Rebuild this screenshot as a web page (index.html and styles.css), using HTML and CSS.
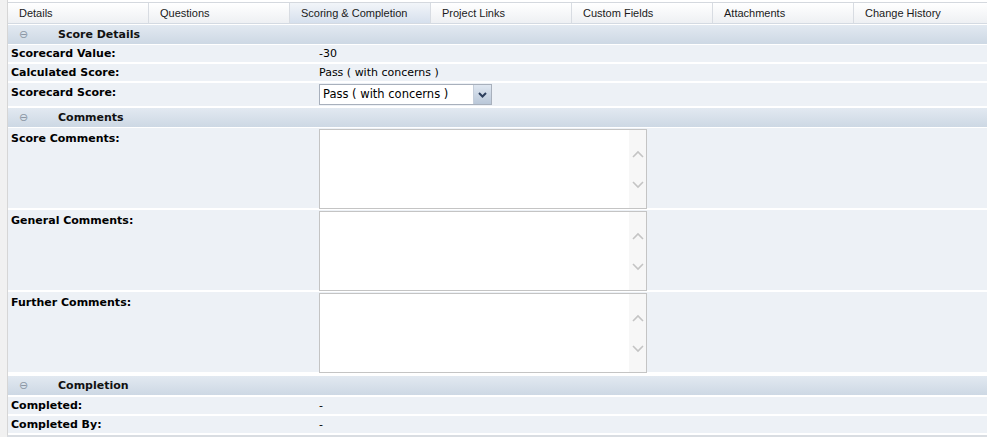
FILE: index.html
```html
<!DOCTYPE html>
<html lang="en">
<head>
    <meta charset="UTF-8">
    <meta name="viewport" content="width=device-width, initial-scale=1.0">
    <title>Scoring &amp; Completion</title>
    <link rel="stylesheet" href="styles.css">
</head>
<body>
    <div class="page">
        <ul class="tabs">
            <li>Details</li>
            <li>Questions</li>
            <li class="active">Scoring &amp; Completion</li>
            <li>Project Links</li>
            <li>Custom Fields</li>
            <li>Attachments</li>
            <li>Change History</li>
        </ul>

        <div class="section-head"><span class="toggle">&#8854;</span>Score Details</div>
        <div class="row">
            <div class="label">Scorecard Value:</div>
            <div class="value">-30</div>
        </div>
        <div class="row">
            <div class="label">Calculated Score:</div>
            <div class="value">Pass ( with concerns )</div>
        </div>
        <div class="row row-select">
            <div class="label">Scorecard Score:</div>
            <div class="value">
                <div class="select">
                    <span class="select-text">Pass ( with concerns )</span>
                    <span class="select-btn">
                        <svg width="9" height="6" viewBox="0 0 9 6"><path d="M1 1 L4.5 4.5 L8 1" fill="none" stroke="#2c3e5c" stroke-width="2"/></svg>
                    </span>
                </div>
            </div>
        </div>

        <div class="section-head"><span class="toggle">&#8854;</span>Comments</div>
        <div class="row row-text">
            <div class="label">Score Comments:</div>
            <div class="value">
                <div class="textbox">
                    <div class="text-area"></div>
                    <div class="scroll">
                        <svg width="12" height="8" viewBox="0 0 12 8"><path d="M1 7 L6 2 L11 7" fill="none" stroke="#c4c4c4" stroke-width="1.6"/></svg>
                        <svg width="12" height="8" viewBox="0 0 12 8"><path d="M1 1 L6 6 L11 1" fill="none" stroke="#c4c4c4" stroke-width="1.6"/></svg>
                    </div>
                </div>
            </div>
        </div>
        <div class="row row-text">
            <div class="label">General Comments:</div>
            <div class="value">
                <div class="textbox">
                    <div class="text-area"></div>
                    <div class="scroll">
                        <svg width="12" height="8" viewBox="0 0 12 8"><path d="M1 7 L6 2 L11 7" fill="none" stroke="#c4c4c4" stroke-width="1.6"/></svg>
                        <svg width="12" height="8" viewBox="0 0 12 8"><path d="M1 1 L6 6 L11 1" fill="none" stroke="#c4c4c4" stroke-width="1.6"/></svg>
                    </div>
                </div>
            </div>
        </div>
        <div class="row row-text">
            <div class="label">Further Comments:</div>
            <div class="value">
                <div class="textbox">
                    <div class="text-area"></div>
                    <div class="scroll">
                        <svg width="12" height="8" viewBox="0 0 12 8"><path d="M1 7 L6 2 L11 7" fill="none" stroke="#c4c4c4" stroke-width="1.6"/></svg>
                        <svg width="12" height="8" viewBox="0 0 12 8"><path d="M1 1 L6 6 L11 1" fill="none" stroke="#c4c4c4" stroke-width="1.6"/></svg>
                    </div>
                </div>
            </div>
        </div>

        <div class="section-head"><span class="toggle">&#8854;</span>Completion</div>
        <div class="row">
            <div class="label">Completed:</div>
            <div class="value">-</div>
        </div>
        <div class="row">
            <div class="label">Completed By:</div>
            <div class="value">-</div>
        </div>
    </div>
</body>
</html>
```

FILE: styles.css
```css
body {
    margin: 0;
    background-color: #fff;
    font-family: "DejaVu Sans", Tahoma, sans-serif;
    font-size: 11px;
    color: #000;
}

.page {
    margin-left: 7px;
    padding-top: 2px;
    border-left: 1px solid #d6d6d6;
    border-bottom: 2px solid #d9dde2;
    box-shadow: -7px 0 0 #f1f1f1;
}

.tabs {
    display: flex;
    list-style: none;
    margin: 0;
    padding: 0;
    height: 21px;
    border-top: 1px solid #d4d8de;
}

.tabs li {
    width: 129px;
    flex: none;
    padding-left: 11px;
    line-height: 20px;
    font-family: "Liberation Sans", Arial, sans-serif;
    font-size: 11px;
    color: #1a1a1a;
    background: linear-gradient(#ffffff, #eef0f3);
    border-right: 1px solid #d8dce2;
    border-bottom: 1px solid #d4dae2;
}

.tabs li:last-child {
    flex: 1;
    border-right: none;
}

.tabs li.active {
    background: linear-gradient(#f2f5f9, #d6e0ed);
}

.section-head {
    display: flex;
    align-items: center;
    height: 19px;
    margin-top: 1px;
    margin-bottom: 1px;
    background: linear-gradient(#e2e9f1, #cdd8e4);
    font-weight: bold;
    font-size: 11px;
    color: #111;
}

.row-text + .section-head {
    margin-top: 4px;
    margin-bottom: 2px;
}

.toggle {
    width: 50px;
    padding-left: 11px;
    box-sizing: border-box;
    color: #8a96a4;
    font-weight: normal;
    font-size: 11px;
}

.row {
    display: flex;
    min-height: 17px;
    margin-bottom: 2px;
    background-color: #edf1f6;
}

.label {
    width: 305px;
    padding-left: 3px;
    font-weight: bold;
    line-height: 17px;
}

.value {
    padding-left: 3px;
    line-height: 17px;
}

.row-select {
    height: 23px;
}

.row-select .label {
    padding-top: 1px;
}

.row-select .value {
    padding-top: 1px;
}

.select {
    display: flex;
    width: 171px;
    height: 19px;
    border: 1px solid #a8b0bc;
    background-color: #fff;
}

.select-text {
    flex: 1;
    padding-left: 3px;
    line-height: 19px;
    font-size: 11.5px;
}

.select-btn {
    width: 17px;
    display: flex;
    align-items: center;
    justify-content: center;
    background: linear-gradient(#dfe7f1, #b9c7d8);
    border-left: 1px solid #c5ceda;
}

.row-text {
    height: 80px;
}

.row-text .label {
    padding-top: 2px;
}

.row-text .value {
    padding-top: 1px;
}

.textbox {
    display: flex;
    width: 326px;
    height: 78px;
    border: 1px solid #c4c4c4;
    background-color: #fff;
}

.text-area {
    flex: 1;
}

.scroll {
    width: 17px;
    display: flex;
    flex-direction: column;
    justify-content: space-around;
    align-items: center;
    padding: 8px 0;
    background-color: #f7f7f7;
}
```
